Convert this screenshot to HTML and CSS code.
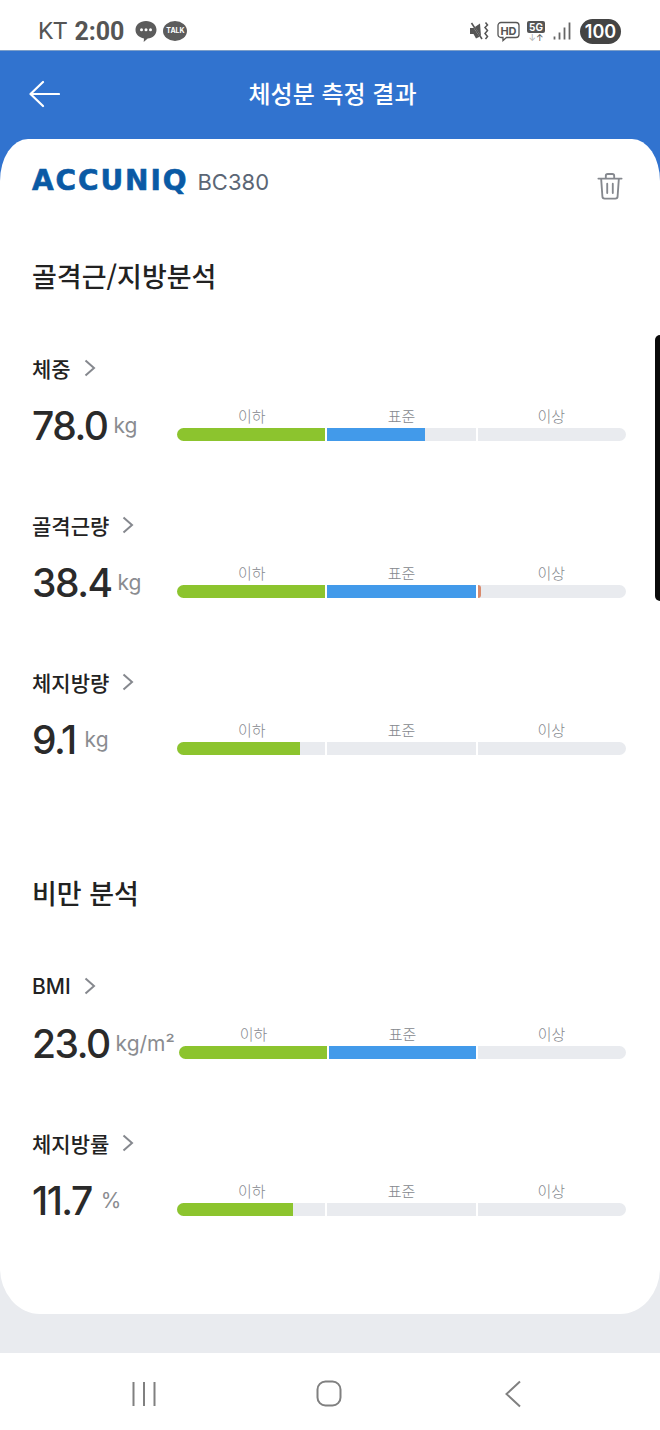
FILE: index.html
```html
<!DOCTYPE html>
<html lang="ko">
<head>
    <meta charset="UTF-8">
    <meta name="viewport" content="width=device-width, initial-scale=1.0">
    <title>체성분 측정 결과</title>
    <link rel="stylesheet" href="styles.css">
</head>
<body>
    <div class="status">
        <div class="status-left">
            <span class="carrier">KT</span>
            <span class="clock">2:00</span>
            <svg class="bubble" width="24" height="24" viewBox="0 0 24 24">
                <path d="M12 2c6 0 10.500 3.600 10.500 8.800 0 5-4 8.400-8.800 8.800l-4 3.400 .3-3.600C5 18.500 1.500 15.400 1.500 10.800 1.500 5.600 6 2 12 2z" fill="#5c5c5c"/>
                <circle cx="7.500" cy="10.800" r="1.500" fill="#fff"/>
                <circle cx="12" cy="10.800" r="1.500" fill="#fff"/>
                <circle cx="16.500" cy="10.800" r="1.500" fill="#fff"/>
            </svg>
            <span class="talk">TALK</span>
        </div>
        <div class="status-right">
            <svg class="mute" width="19" height="20" viewBox="0 0 19 20">
                <path d="M0 7h3.500L10 2.500 11 15 6 17.500 3.500 13H0z" fill="#555"/>
                <path d="M1 1.500l11 16.500" stroke="#fff" stroke-width="1.400"/>
                <path d="M1.500 2l10.500 16" stroke="#555" stroke-width="1.600"/>
                <path d="M15.500 1.500l2 2.500-2.500 2.500 2.500 3-2.500 3 2.500 3-2 2.500" fill="none" stroke="#555" stroke-width="1.500"/>
            </svg>
            <svg class="hd" width="23" height="21" viewBox="0 0 23 21">
                <path d="M4 1.500h15a3 3 0 0 1 3 3v9a3 3 0 0 1-3 3H9.500L6 19.500v-3H4a3 3 0 0 1-3-3v-9a3 3 0 0 1 3-3z" fill="none" stroke="#555" stroke-width="1.300"/>
                <text x="11.500" y="13.500" text-anchor="middle" class="hd-text">HD</text>
            </svg>
            <span class="net"><b>5G</b><i><u>↓</u>↑</i></span>
            <svg class="signal" width="18" height="20" viewBox="0 0 18 20">
                <path d="M1.500 15.500v3M6.500 11.500v7M11.500 6.500v12M16.500 1.500v17" fill="none" stroke="#666" stroke-width="1.800"/>
            </svg>
            <span class="battery">100</span>
        </div>
    </div>

    <header class="topbar">
        <svg class="back" width="32" height="28" viewBox="0 0 32 28">
            <path d="M15 2L2.500 14 15 26M2.500 14H31" fill="none" stroke="#fff" stroke-width="2.200" stroke-linecap="round" stroke-linejoin="round"/>
        </svg>
        <h1>체성분 측정 결과</h1>
    </header>

    <div class="main">
        <section class="card">
            <div class="brand">
                <span class="logo">ACCUNIQ</span>
                <span class="model">BC380</span>
                <svg class="trash" width="26" height="29" viewBox="0 0 28 30">
                    <path d="M1.500 6.500h25M9.500 6V3.500a2 2 0 0 1 2-2h5a2 2 0 0 1 2 2V6M4.500 7l1.300 18.500a2.500 2.500 0 0 0 2.500 2.500h11.400a2.500 2.500 0 0 0 2.500-2.500L23.500 7M11 12v10M17 12v10" fill="none" stroke="#85888e" stroke-width="2" stroke-linecap="round"/>
                </svg>
            </div>

            <h2 class="section-title first">골격근/지방분석</h2>

            <div class="metric">
                <div class="metric-name">체중 <svg class="chev" width="14" height="20" viewBox="0 0 14 20"><path d="M2.500 2.500L11 10l-8.500 7.500" fill="none" stroke="#85888e" stroke-width="2"/></svg></div>
                <div class="metric-row">
                    <div class="reading"><span class="value">78.0</span><span class="unit">kg</span></div>
                    <div class="gauge">
                        <div class="gauge-labels"><span>이하</span><span>표준</span><span>이상</span></div>
                        <div class="track">
                            <div class="seg"><div class="fill low" style="width:100%"></div></div>
                            <div class="seg"><div class="fill mid" style="width:66%"></div></div>
                            <div class="seg"></div>
                        </div>
                    </div>
                </div>
            </div>

            <div class="metric">
                <div class="metric-name">골격근량 <svg class="chev" width="14" height="20" viewBox="0 0 14 20"><path d="M2.500 2.500L11 10l-8.500 7.500" fill="none" stroke="#85888e" stroke-width="2"/></svg></div>
                <div class="metric-row">
                    <div class="reading"><span class="value">38.4</span><span class="unit">kg</span></div>
                    <div class="gauge">
                        <div class="gauge-labels"><span>이하</span><span>표준</span><span>이상</span></div>
                        <div class="track">
                            <div class="seg"><div class="fill low" style="width:100%"></div></div>
                            <div class="seg"><div class="fill mid" style="width:100%"></div></div>
                            <div class="seg"><div class="fill high" style="width:2%"></div></div>
                        </div>
                    </div>
                </div>
            </div>

            <div class="metric">
                <div class="metric-name">체지방량 <svg class="chev" width="14" height="20" viewBox="0 0 14 20"><path d="M2.500 2.500L11 10l-8.500 7.500" fill="none" stroke="#85888e" stroke-width="2"/></svg></div>
                <div class="metric-row">
                    <div class="reading"><span class="value">9.1</span><span class="unit far">kg</span></div>
                    <div class="gauge">
                        <div class="gauge-labels"><span>이하</span><span>표준</span><span>이상</span></div>
                        <div class="track">
                            <div class="seg"><div class="fill low" style="width:83%"></div></div>
                            <div class="seg"></div>
                            <div class="seg"></div>
                        </div>
                    </div>
                </div>
            </div>

            <h2 class="section-title second">비만 분석</h2>

            <div class="metric">
                <div class="metric-name">BMI <svg class="chev" width="14" height="20" viewBox="0 0 14 20"><path d="M2.500 2.500L11 10l-8.500 7.500" fill="none" stroke="#85888e" stroke-width="2"/></svg></div>
                <div class="metric-row">
                    <div class="reading wide"><span class="value">23.0</span><span class="unit">kg/m²</span></div>
                    <div class="gauge">
                        <div class="gauge-labels"><span>이하</span><span>표준</span><span>이상</span></div>
                        <div class="track">
                            <div class="seg"><div class="fill low" style="width:100%"></div></div>
                            <div class="seg"><div class="fill mid" style="width:100%"></div></div>
                            <div class="seg"></div>
                        </div>
                    </div>
                </div>
            </div>

            <div class="metric">
                <div class="metric-name">체지방률 <svg class="chev" width="14" height="20" viewBox="0 0 14 20"><path d="M2.500 2.500L11 10l-8.500 7.500" fill="none" stroke="#85888e" stroke-width="2"/></svg></div>
                <div class="metric-row">
                    <div class="reading"><span class="value">11.7</span><span class="unit far">%</span></div>
                    <div class="gauge">
                        <div class="gauge-labels"><span>이하</span><span>표준</span><span>이상</span></div>
                        <div class="track">
                            <div class="seg"><div class="fill low" style="width:78%"></div></div>
                            <div class="seg"></div>
                            <div class="seg"></div>
                        </div>
                    </div>
                </div>
            </div>
        </section>
    </div>

    <nav class="softkeys">
        <svg width="26" height="26" viewBox="0 0 26 26"><path d="M2.500 1v24M13 1v24M23.500 1v24" fill="none" stroke="#808080" stroke-width="2"/></svg>
        <svg class="home" width="26" height="27" viewBox="0 0 26 27"><rect x="1.500" y="1.500" width="23" height="24" rx="8" fill="none" stroke="#808080" stroke-width="2"/></svg>
        <svg width="18" height="28" viewBox="0 0 18 28"><path d="M16 1.500L2.500 14 16 26.500" fill="none" stroke="#808080" stroke-width="2"/></svg>
    </nav>

    <div class="edge-handle"></div>
</body>
</html>
```

FILE: styles.css
```css
* {
    box-sizing: border-box;
}
body {
    margin: 0;
    width: 660px;
    height: 1430px;
    overflow: hidden;
    position: relative;
    background-color: #fff;
    color: #222;
    font-family: Inter, "Noto Sans CJK KR", sans-serif;
}
h1, h2 {
    margin: 0;
}

/* status bar */
.status {
    height: 50px;
    padding: 12px 39px 0 38px;
    display: flex;
    justify-content: space-between;
    align-items: center;
    color: #555;
}
.status-left, .status-right {
    display: flex;
    align-items: center;
}
.carrier {
    font-family: Roboto, sans-serif;
    font-size: 24px;
    margin-right: 7px;
}
.clock {
    font-family: Roboto, sans-serif;
    font-size: 25px;
    font-weight: 700;
    margin-right: 10px;
}
.bubble {
    margin-right: 5px;
}
.talk {
    width: 24px;
    height: 20px;
    border-radius: 50%;
    background-color: #5c5c5c;
    color: #fff;
    font-size: 7px;
    font-weight: 700;
    line-height: 20px;
    text-align: center;
}
.status-right {
    gap: 8px;
}
.hd-text {
    fill: #555;
    font-size: 11px;
    font-weight: 700;
}
.net {
    display: flex;
    flex-direction: column;
    align-items: center;
    width: 18px;
    margin-left: -1px;
}
.net b {
    width: 18px;
    height: 12px;
    border-radius: 2px;
    background-color: #555;
    color: #fff;
    font-size: 10px;
    line-height: 12px;
    text-align: center;
}
.net i {
    font-size: 9px;
    font-style: normal;
    line-height: 9px;
}
.net u {
    color: #aaa;
    text-decoration: none;
}
.battery {
    width: 41px;
    height: 25px;
    margin-left: 1px;
    border-radius: 13px;
    background-color: #444;
    color: #fff;
    font-size: 18px;
    font-weight: 600;
    line-height: 25px;
    text-align: center;
}

/* blue header */
.topbar {
    height: 89px;
    position: relative;
    display: flex;
    align-items: center;
    justify-content: center;
    background-color: #3173cf;
    border-top: 1px solid #7d9fc9;
    padding: 0 0 6px 5px;
}
.topbar h1 {
    color: #fff;
    font-family: "Noto Sans CJK KR", sans-serif;
    font-size: 24px;
    font-weight: 500;
}
.back {
    position: absolute;
    left: 28px;
    top: 29px;
}

/* card */
.main {
    height: 1214px;
    background: linear-gradient(#3173cf 0 50px, #e9ebef 50px);
}
.card {
    height: 1175px;
    padding: 26px 34px 0 32px;
    background-color: #fff;
    border-radius: 28px 28px 40px 40px / 42px 42px 46px 46px;
}
.brand {
    height: 32px;
    display: flex;
    align-items: center;
}
.logo {
    font-family: "DejaVu Sans", sans-serif;
    font-size: 28px;
    font-weight: 700;
    color: #0a5aa5;
    letter-spacing: 1.900px;
    margin: -2px 9px 0 0;
    -webkit-text-stroke: 0.6px #0a5aa5;
}
.model {
    font-size: 22px;
    color: #5b6675;
    margin-top: 2px;
}
.trash {
    margin: 10px 3px 0 auto;
}
.section-title {
    height: 40px;
    font-family: "Noto Sans CJK KR", sans-serif;
    font-size: 27px;
    font-weight: 500;
    line-height: 40px;
    color: #222;
}
.section-title.first {
    margin: 59px 0 58px;
}
.section-title.second {
    margin: 48px 0 59px;
}

/* metric rows */
.metric {
    height: 157px;
}
.metric-name {
    height: 28px;
    margin-bottom: 2px;
    display: flex;
    align-items: center;
    gap: 6px;
    font-size: 21px;
    font-weight: 500;
}
.chev {
    margin-left: 6px;
}
.metric-row {
    height: 57px;
    display: flex;
    align-items: flex-end;
}
.reading {
    width: 145px;
    flex: none;
    display: flex;
    align-items: baseline;
    white-space: nowrap;
    margin-bottom: -4px;
}
.reading.wide {
    width: 147px;
}
.value {
    font-size: 39px;
    font-weight: 500;
    letter-spacing: -1.500px;
    line-height: 38px;
    color: #2a2a2a;
}
.unit {
    margin-left: 6px;
    position: relative;
    top: -7px;
    font-size: 21px;
    color: #8a8c90;
}
.unit.far {
    margin-left: 9px;
}
.gauge {
    flex: 1;
}
.gauge-labels {
    display: flex;
    height: 23px;
    padding-top: 1px;
    font-family: "Noto Sans CJK KR", sans-serif;
    font-size: 15px;
    font-weight: 300;
    color: #85888e;
    line-height: 20px;
    text-align: center;
}
.gauge-labels span {
    flex: 1;
}
.track {
    height: 13px;
    display: flex;
    gap: 2px;
    border-radius: 7px;
    overflow: hidden;
}
.seg {
    flex: 1;
    background-color: #e9ebef;
}
.fill {
    height: 100%;
}
.fill.low {
    background-color: #8cc42e;
}
.fill.mid {
    background-color: #429aea;
}
.fill.high {
    background-color: #d98a6c;
    border-radius: 0 4px 4px 0;
}

/* android nav */
.softkeys {
    height: 77px;
    display: grid;
    grid-template-columns: repeat(3, 184.500px);
    justify-items: center;
    align-items: center;
    padding: 4px 0 0 52px;
}
.edge-handle {
    position: absolute;
    right: 0;
    top: 335px;
    width: 5px;
    height: 266px;
    background-color: #0a0a0a;
    border-radius: 5px 0 0 5px;
}
```
